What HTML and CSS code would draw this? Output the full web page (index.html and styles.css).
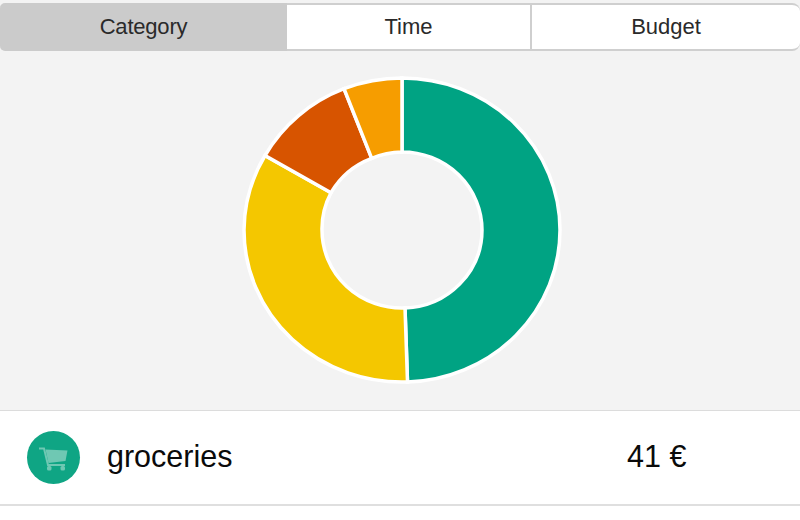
FILE: index.html
```html
<!DOCTYPE html>
<html lang="en">
<head>
<meta charset="utf-8">
<title>Expenses</title>
<link rel="stylesheet" href="styles.css">
</head>
<body>
<nav class="tabs">
  <div class="tab tab-category is-active">Category</div>
  <div class="tab tab-time">Time</div>
  <div class="tab tab-budget">Budget</div>
</nav>
<main class="chart">
  <svg class="donut" width="800" height="359" viewBox="0 51 800 359">
    <path class="seg" fill="#00a383" d="M402 78 A158 152 0 0 1 560 230 A158 152 0 0 1 407.500 382 L405 308 A80 78 0 0 0 482 230 A80 78 0 0 0 402 152 Z"/>
    <path class="seg" fill="#f4c700" d="M407.500 382 A158 152 0 0 1 244 230 A158 152 0 0 1 265 155.500 L331 192.700 A80 78 0 0 0 322 230 A80 78 0 0 0 405 308 Z"/>
    <path class="seg" fill="#d75400" d="M265 155.500 A158 152 0 0 1 344 88.700 L371.700 158.300 A80 78 0 0 0 331 192.700 Z"/>
    <path class="seg" fill="#f69d00" d="M344 88.700 A158 152 0 0 1 402 78 L402 152 A80 78 0 0 0 371.700 158.300 Z"/>
  </svg>
</main>
<section class="row">
  <div class="badge">
    <svg width="30" height="26" viewBox="0 0 30 26">
      <path class="cart" d="M0 3.500h5l4 16.500h17"/>
      <path class="cart-fill" d="M6.500 4.500L28.500 5.500L26.500 16L9.500 18z"/>
      <rect class="cart-fill" x="8" y="21" width="4.500" height="4.500" rx="1.500"/>
      <rect class="cart-fill" x="21.500" y="21" width="4.500" height="4.500" rx="1.500"/>
    </svg>
  </div>
  <div class="label">groceries</div>
  <div class="amount">41 €</div>
</section>
</body>
</html>
```
FILE: styles.css
```css
html, body {
  margin: 0;
  height: 520px;
  overflow: hidden;
  background: #fff;
  font-family: "Liberation Sans", Arial, sans-serif;
}
.tabs {
  display: flex;
  height: 51px;
  box-sizing: border-box;
  padding-top: 3px;
  background: #f3f3f3;
}
.tab {
  display: flex;
  align-items: center;
  justify-content: center;
  box-sizing: border-box;
  background: #fff;
  border: 2px solid #cfcfcf;
  border-left: 0;
  color: #2a2a2a;
  font-size: 22px;
}
.tab-category { width: 287px; padding-left: 2px; letter-spacing: -0.2px; border-radius: 5px 0 0 5px; }
.tab-time { width: 245px; }
.tab-budget { flex: 1; border-right: 0; border-radius: 0 8px 8px 0; }
.tab.is-active { background: #cbcbcb; border-color: #cbcbcb; }
.chart {
  height: 359px;
  background: #f3f3f3;
}
.donut { display: block; }
.seg { stroke: #fff; stroke-width: 3.500; stroke-linejoin: miter; }
.row {
  display: flex;
  align-items: center;
  box-sizing: border-box;
  height: 96px;
  padding-left: 27px;
  background: #fff;
  border-top: 1px solid #dcdcdc;
  border-bottom: 2px solid #dfdfdf;
  color: #0a0a0a;
  font-size: 30.500px;
}
.badge {
  display: flex;
  align-items: center;
  justify-content: center;
  flex: none;
  width: 53px;
  height: 53px;
  border-radius: 50%;
  background: #0fa584;
}
.cart { fill: none; stroke: #6fc8b3; stroke-width: 2; }
.cart-fill { fill: #6fc8b3; }
.label { margin: 0 0 3px 27px; width: 520px; }
.amount { margin-bottom: 3px; white-space: nowrap; }
```
